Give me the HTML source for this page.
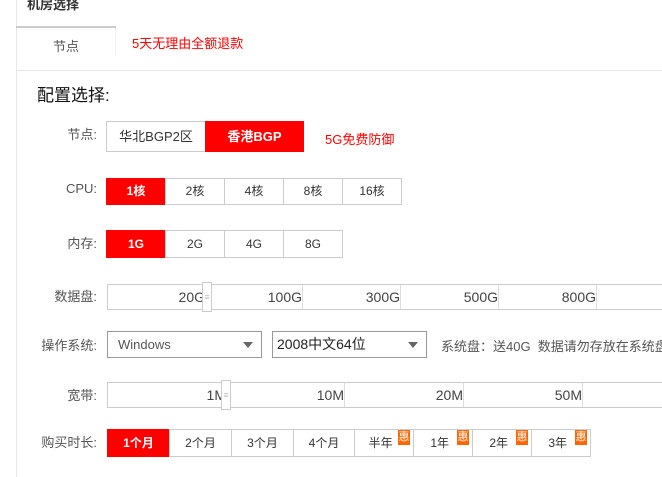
<!DOCTYPE html>
<html><head><meta charset="utf-8"><style>
body{margin:0;width:662px;height:477px;overflow:hidden;background:#fff;font-family:"Liberation Sans","Noto Sans CJK SC",sans-serif;font-size:12px;color:#333;position:relative}
.a{position:absolute}
.lbl{position:absolute;width:97px;text-align:right;left:0;font-size:13px;color:#555}
.btn{position:absolute;box-sizing:border-box;border:1px solid #ccc;text-align:center;background:#fff;color:#333}
.on{background:#f00;color:#fff;font-weight:bold;border-color:#f00}
.seg{position:absolute;box-sizing:border-box;text-align:right;font-size:14px;color:#444;border-right:1px solid #ddd}
.hd{position:absolute;width:10px;background:#fff;border:1px solid #ccc;box-sizing:border-box;color:#bbb;font-size:9px;text-align:center}
.hui{position:absolute;width:12px;height:15px;background:#f60;color:#fff;font-size:11px;line-height:14px;text-align:center}
.sel{position:absolute;box-sizing:border-box;border:1px solid #999;height:27px;line-height:25px;padding-left:4px}
.tri{position:absolute;right:8px;top:10px;width:0;height:0;border-left:5px solid transparent;border-right:5px solid transparent;border-top:6px solid #666}
</style></head><body>
<div class="a" style="left:16px;top:0;width:1px;height:477px;background:#e8e8e8"></div>
<div class="a" style="left:27px;top:-6px;font-weight:bold;font-size:13px;color:#333">机房选择</div>
<div class="a" style="left:16px;top:26px;width:100px;height:2px;background:#ccc"></div>
<div class="a" style="left:115px;top:28px;width:1px;height:28px;background:#eee"></div>
<div class="a" style="left:16px;top:36px;width:100px;text-align:center;font-size:13px;color:#555">节点</div>
<div class="a" style="left:132px;top:33px;font-size:13px;color:#f00">5天无理由全额退款</div>
<div class="a" style="left:16px;top:70px;width:646px;height:1px;background:#e8e8e8"></div>
<div class="a" style="left:37px;top:81px;font-size:17px;color:#111">配置选择:</div>

<div class="lbl" style="top:124px">节点:</div>
<div class="btn" style="left:106px;top:121px;width:100px;height:31px;line-height:29px;font-size:13px">华北BGP2区</div>
<div class="btn on" style="left:205px;top:121px;width:99px;height:31px;line-height:29px;font-size:13px">香港BGP</div>
<div class="a" style="left:325px;top:129px;font-size:13px;color:#f00">5G免费防御</div>

<div class="lbl" style="top:181px">CPU:</div>
<div class="btn on" style="left:106px;top:178px;width:60px;height:27px;line-height:25px">1核</div>
<div class="btn" style="left:165px;top:178px;width:60px;height:27px;line-height:25px">2核</div>
<div class="btn" style="left:224px;top:178px;width:60px;height:27px;line-height:25px">4核</div>
<div class="btn" style="left:283px;top:178px;width:60px;height:27px;line-height:25px">8核</div>
<div class="btn" style="left:342px;top:178px;width:60px;height:27px;line-height:25px">16核</div>

<div class="lbl" style="top:233px">内存:</div>
<div class="btn on" style="left:106px;top:230px;width:60px;height:28px;line-height:26px">1G</div>
<div class="btn" style="left:165px;top:230px;width:60px;height:28px;line-height:26px">2G</div>
<div class="btn" style="left:224px;top:230px;width:60px;height:28px;line-height:26px">4G</div>
<div class="btn" style="left:283px;top:230px;width:60px;height:28px;line-height:26px">8G</div>

<div class="lbl" style="top:286px">数据盘:</div>
<div class="a" style="left:107px;top:284px;width:560px;height:26px;border:1px solid #ccc;box-sizing:border-box"></div>
<div class="seg" style="left:107px;top:285px;width:98px;height:24px;line-height:24px;border:0">20G</div>
<div class="seg" style="left:205px;top:285px;width:98px;height:24px;line-height:24px">100G</div>
<div class="seg" style="left:303px;top:285px;width:98px;height:24px;line-height:24px">300G</div>
<div class="seg" style="left:401px;top:285px;width:98px;height:24px;line-height:24px">500G</div>
<div class="seg" style="left:499px;top:285px;width:98px;height:24px;line-height:24px">800G</div>
<div class="hd" style="left:202px;top:282px;height:30px;line-height:28px">≡</div>

<div class="lbl" style="top:335px">操作系统:</div>
<div class="sel" style="left:107px;top:331px;width:155px;font-size:13px;color:#555;padding-left:10px">Windows<div class="tri"></div></div>
<div class="sel" style="left:272px;top:331px;width:155px;font-size:14px;color:#222">2008中文64位<div class="tri"></div></div>
<div class="a" style="left:441px;top:336px;font-size:13px;color:#555;white-space:nowrap">系统盘：送40G&nbsp; 数据请勿存放在系统盘</div>

<div class="lbl" style="top:385px">宽带:</div>
<div class="a" style="left:107px;top:382px;width:560px;height:26px;border:1px solid #ccc;box-sizing:border-box"></div>
<div class="seg" style="left:107px;top:383px;width:119px;height:24px;line-height:24px;border:0">1M</div>
<div class="seg" style="left:226px;top:383px;width:119px;height:24px;line-height:24px">10M</div>
<div class="seg" style="left:345px;top:383px;width:119px;height:24px;line-height:24px">20M</div>
<div class="seg" style="left:464px;top:383px;width:119px;height:24px;line-height:24px">50M</div>
<div class="hd" style="left:221px;top:380px;height:30px;line-height:28px">≡</div>

<div class="lbl" style="top:432px">购买时长:</div>
<div class="btn on" style="left:107px;top:429px;width:63px;height:28px;line-height:26px">1个月</div>
<div class="btn" style="left:169px;top:429px;width:63px;height:28px;line-height:26px">2个月</div>
<div class="btn" style="left:231px;top:429px;width:63px;height:28px;line-height:26px">3个月</div>
<div class="btn" style="left:293px;top:429px;width:62px;height:28px;line-height:26px">4个月</div>
<div class="btn" style="left:354px;top:429px;width:60px;height:28px;line-height:26px">半年&nbsp;&nbsp;</div>
<div class="btn" style="left:413px;top:429px;width:60px;height:28px;line-height:26px">1年&nbsp;&nbsp;</div>
<div class="btn" style="left:472px;top:429px;width:60px;height:28px;line-height:26px">2年&nbsp;&nbsp;</div>
<div class="btn" style="left:531px;top:429px;width:60px;height:28px;line-height:26px">3年&nbsp;&nbsp;</div>
<div class="hui" style="left:398px;top:430px">惠</div>
<div class="hui" style="left:457px;top:430px">惠</div>
<div class="hui" style="left:516px;top:430px">惠</div>
<div class="hui" style="left:575px;top:430px">惠</div>
</body></html>
